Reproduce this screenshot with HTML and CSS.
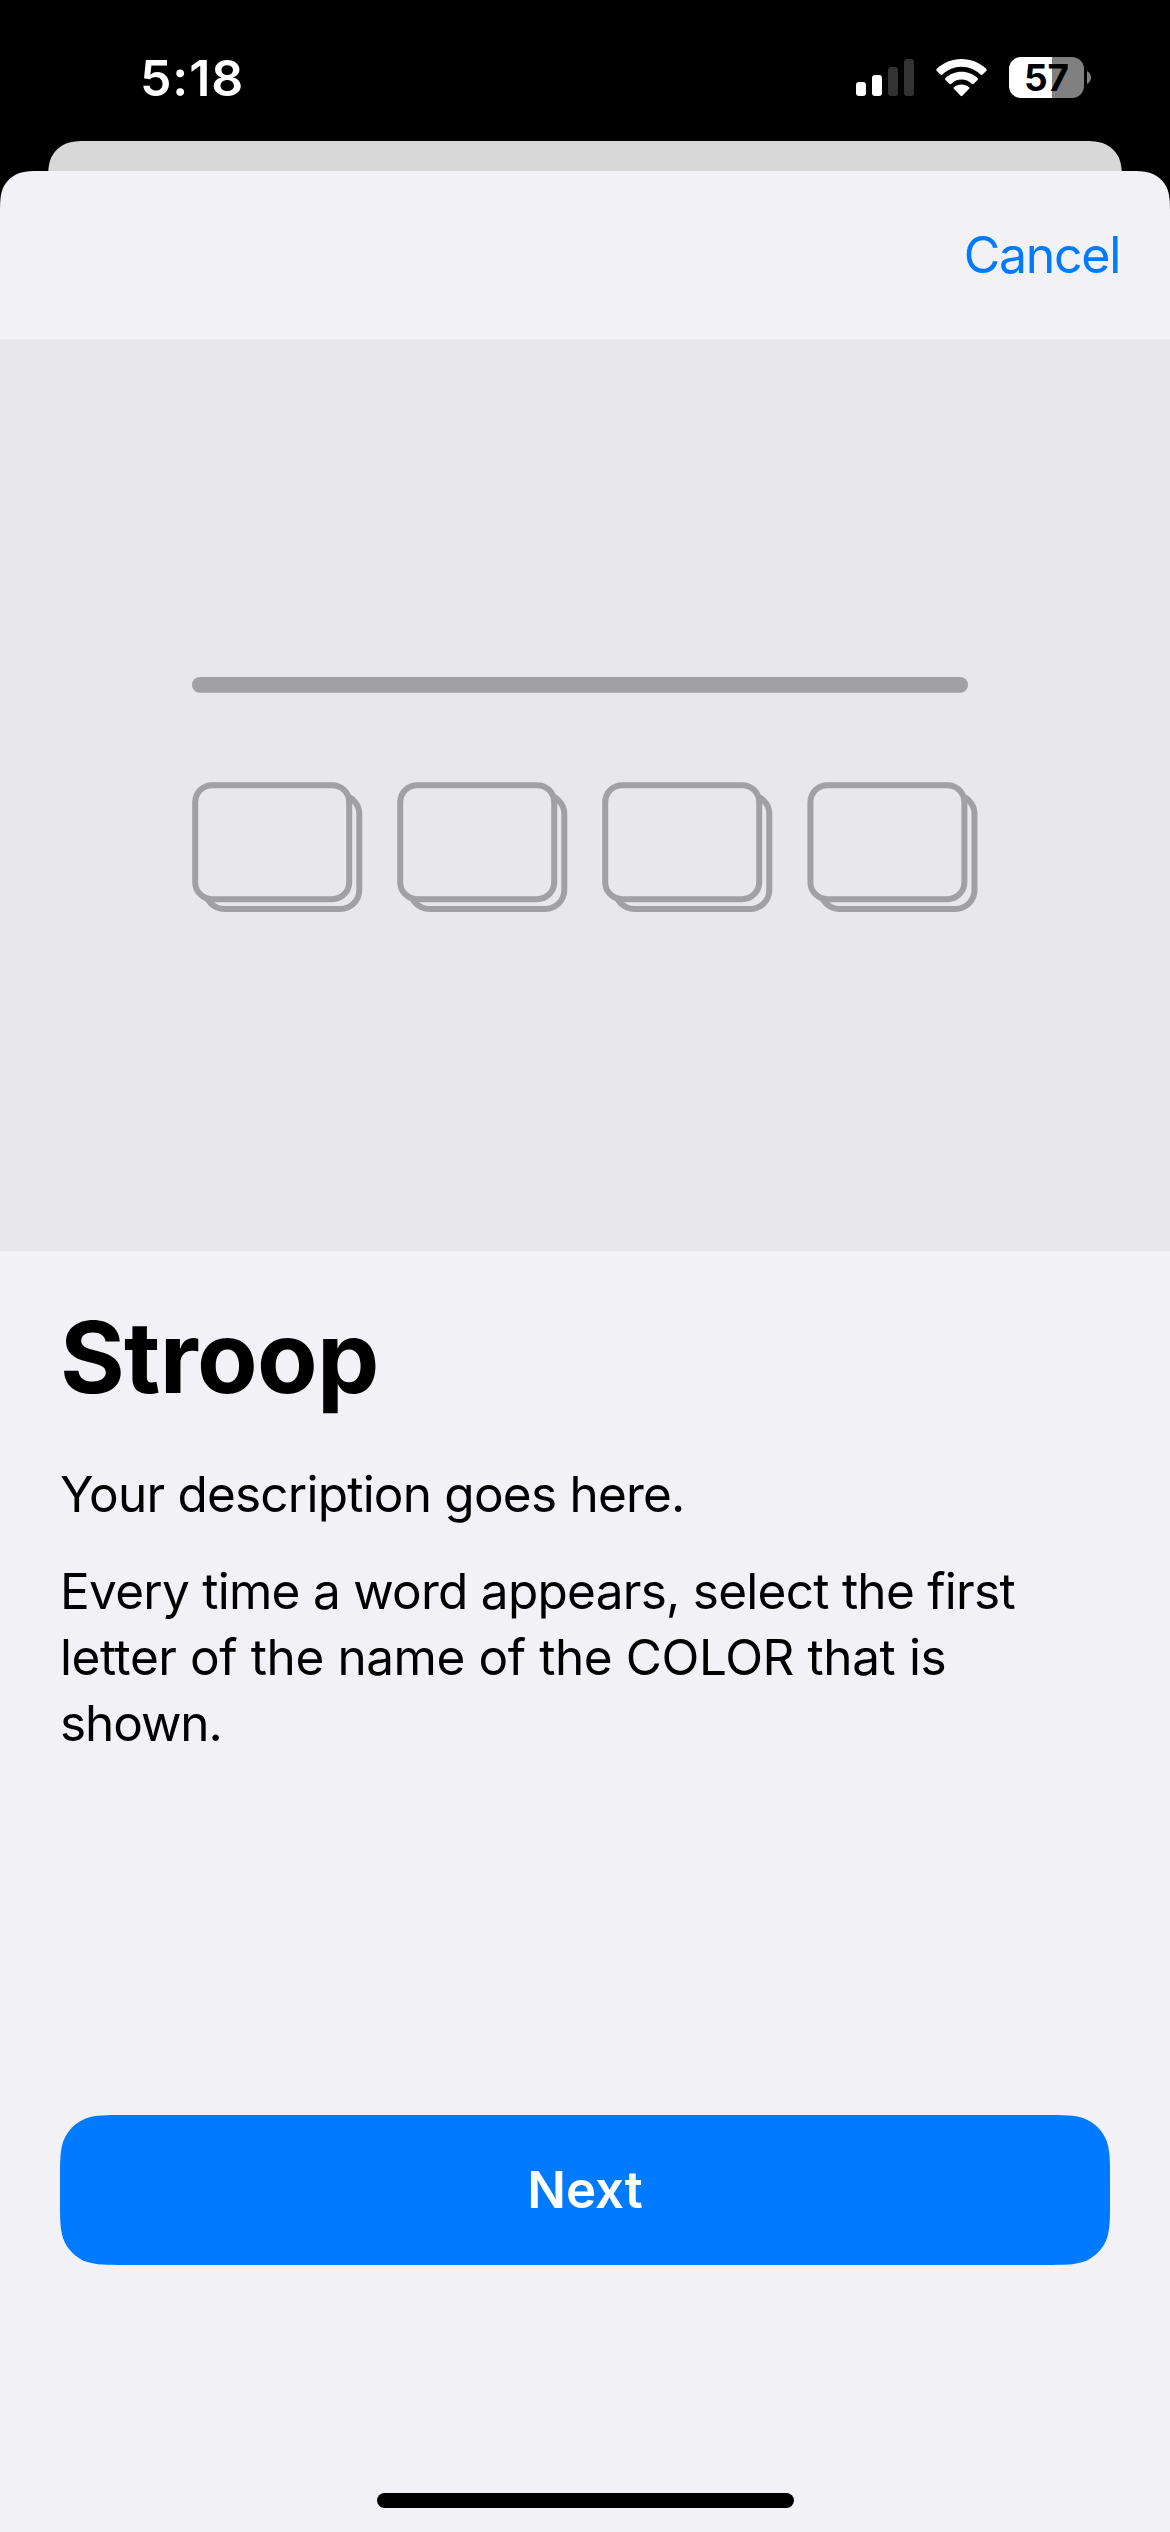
FILE: index.html
```
<!DOCTYPE html>
<html lang="en">
<head>
<meta charset="utf-8">
<title>Stroop</title>
<link rel="stylesheet" href="styles.css">
</head>
<body>
<div class="screen">
  <header class="status">
    <span class="time">5:18</span>
    <div class="indicators">
      <svg class="signal" width="58" height="37" viewBox="0 0 58 37" fill="#fff">
        <rect x="0" y="23" width="10" height="14" rx="3"/>
        <rect x="16" y="16" width="10" height="21" rx="3"/>
        <rect x="32" y="8" width="10" height="29" rx="3" fill="#333"/>
        <rect x="48" y="0" width="10" height="37" rx="3" fill="#333"/>
      </svg>
      <svg class="wifi" width="51" height="38" viewBox="0 0 51 38" fill="#fff">
        <path d="M25.5 0C35 0 43.600 3.600 50.200 9.800Q51.200 10.900 50.200 12L46.600 15.500Q45.500 16.400 44.500 15.500C39.500 10.600 32.800 7.700 25.500 7.700S11.500 10.600 6.500 15.500Q5.500 16.400 4.400 15.500L.8 12Q-.2 10.900 .8 9.800C7.400 3.600 16 0 25.500 0Z"/>
        <path d="M25.500 12.800C31.700 12.800 37.300 15.200 41.500 19Q42.500 20 41.500 21.100L37.800 24.700Q36.800 25.600 35.700 24.700C33 22.200 29.400 20.600 25.500 20.600S18 22.200 15.300 24.700Q14.200 25.600 13.200 24.700L9.500 21.100Q8.500 20 9.500 19C13.700 15.200 19.300 12.800 25.500 12.800Z"/>
        <path d="M25.500 25.600C28.400 25.600 31 26.600 32.900 28.200Q33.800 29.100 32.900 30.100L26.600 36.600Q25.500 37.700 24.400 36.600L18.100 30.100Q17.200 29.100 18.100 28.200C20 26.600 22.600 25.600 25.500 25.600Z"/>
      </svg>
      <div class="battery"><span class="level">57</span></div>
      <svg class="nub" width="4" height="13" viewBox="0 0 4 13"><path d="M0 0C2.500 1.200 4 3.700 4 6.500S2.500 11.800 0 13Z" fill="#808080"/></svg>
    </div>
  </header>
  <div class="backsheet"></div>
  <main class="sheet">
    <nav class="toolbar"><a class="cancel">Cancel</a></nav>
    <div class="hero">
      <svg width="786" height="236" viewBox="0 0 786 236">
        <defs>
          <g id="card" fill="#e8e7ec" stroke="#a1a0a5" stroke-width="6">
            <rect x="13.300" y="13" width="154" height="114" rx="19"/>
            <rect x="3.200" y="3.200" width="154" height="114" rx="17"/>
          </g>
        </defs>
        <rect x="0" y="0" width="776" height="15.700" rx="7.850" fill="#a1a0a5"/>
        <use href="#card" x="0" y="105"/>
        <use href="#card" x="205" y="105"/>
        <use href="#card" x="410" y="105"/>
        <use href="#card" x="615.200" y="105"/>
      </svg>
    </div>
    <section class="copy">
      <h1>Stroop</h1>
      <p class="description">Your description goes here.</p>
      <p class="instructions">Every time a word appears, select the first<br><span class="loose">letter of the name of the COLOR that is</span><br><span class="tight">shown.</span></p>
    </section>
    <button class="next"><span>Next</span></button>
    <div class="home"></div>
  </main>
</div>
</body>
</html>
```
FILE: styles.css
```
* { box-sizing: border-box; margin: 0; padding: 0; }

body {
  background: #000;
  font-family: Inter, "Liberation Sans", sans-serif;
  -webkit-font-smoothing: antialiased;
}

.screen {
  width: 1170px;
  height: 2532px;
  display: flex;
  flex-direction: column;
  background: #000;
  overflow: hidden;
}

.status {
  height: 141px;
  flex: none;
  display: flex;
  justify-content: space-between;
  align-items: flex-start;
  padding: 48px 79px 0 140px;
  color: #fff;
}

.time { font-size: 50px; line-height: 60px; font-weight: 600; letter-spacing: 0.9px; }

.indicators { display: flex; align-items: flex-start; padding-top: 9px; }
.signal { margin: 2px 22px 0 0; }
.wifi { margin: 2px 22px 0 0; }

.battery {
  width: 75px;
  height: 41px;
  border-radius: 12px;
  background: linear-gradient(90deg, #fff 43px, #808080 43px);
  text-align: center;
}

.level {
  display: block;
  color: #000;
  font-size: 37px;
  line-height: 41px;
  font-weight: 700;
}

.nub { margin: 14px 0 0 3px; }

.backsheet {
  height: 30px;
  flex: none;
  margin: 0 48px;
  background: #d8d8d8;
  clip-path: path("M0 45C0 32 0 26 2.250 18.900C5.100 11.200 11.200 5.100 18.900 2.250C26 0 32 0 45 0H1029C1042 0 1048 0 1055.100 2.250C1062.800 5.100 1068.900 11.200 1071.750 18.900C1074 26 1074 32 1074 45Z");
}

.sheet {
  flex: 1;
  display: flex;
  flex-direction: column;
  background: #f2f1f6;
  clip-path: path("M0 46C0 32.700 0 26 2.250 18.900C5.100 11.200 11.200 5.100 18.900 2.250C26 0 32.700 0 46 0H1124C1137.300 0 1144 0 1151.100 2.250C1158.800 5.100 1164.900 11.200 1167.750 18.900C1170 26 1170 32.700 1170 46V2361H0Z");
}

.toolbar {
  height: 168px;
  flex: none;
  display: flex;
  justify-content: flex-end;
  padding: 54px 50px 0 0;
}

.cancel { color: #007aff; font-size: 50px; line-height: 60px; letter-spacing: -1.3px; }

.hero {
  height: 912px;
  flex: none;
  padding: 338px 0 0 192px;
  background: #e8e7ec;
}

.hero svg { display: block; }

.copy { height: 864px; flex: none; padding: 46px 60px 0; color: #000; }

h1 { font-size: 99px; line-height: 120px; font-weight: 700; letter-spacing: -0.7px; }

.description, .instructions { font-size: 49.500px; line-height: 66px; }
.description { margin-top: 44px; letter-spacing: -0.78px; }
.instructions { margin-top: 31px; letter-spacing: -0.73px; }
.loose { letter-spacing: -0.41px; }
.tight { letter-spacing: -1.1px; }

.next {
  height: 150px;
  flex: none;
  margin: 0 60px;
  border: 0;
  background: #007aff;
  color: #fff;
  font: 600 51px/60px Inter, "Liberation Sans", sans-serif;
  clip-path: path("M0 64.200C0 45.700 0 36.500 3.150 26.500C7.100 15.700 15.700 7.100 26.500 3.150C36.500 0 45.700 0 64.200 0H985.800C1004.300 0 1013.500 0 1023.500 3.150C1034.300 7.100 1042.900 15.700 1046.850 26.500C1050 36.500 1050 45.700 1050 64.200V85.800C1050 104.300 1050 113.500 1046.850 123.500C1042.900 134.300 1034.300 142.900 1023.500 146.850C1013.500 150 1004.300 150 985.800 150H64.200C45.700 150 36.500 150 26.500 146.850C15.700 142.900 7.100 134.300 3.150 123.500C0 113.500 0 104.300 0 85.800Z");
}

.home {
  width: 417px;
  height: 15px;
  margin: 228px 0 0 377px;
  border-radius: 8px;
  background: #000;
}
```
